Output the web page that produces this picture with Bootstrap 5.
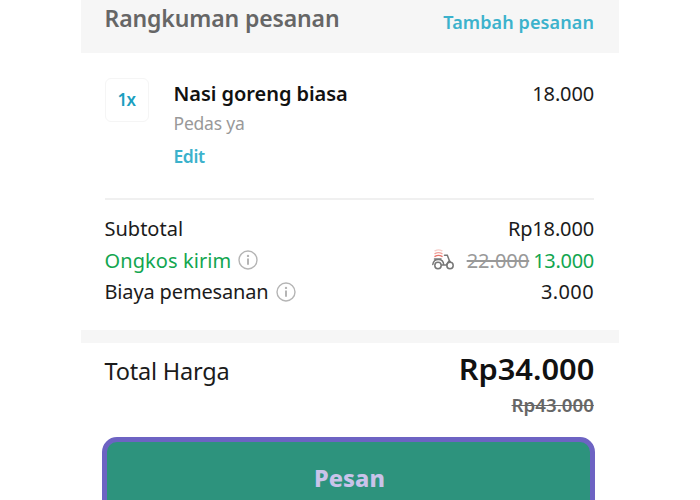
<!DOCTYPE html>
<html lang="id">
<head>
<meta charset="utf-8">
<meta name="viewport" content="width=device-width, initial-scale=1">
<title>Rangkuman pesanan</title>
<link href="https://cdn.jsdelivr.net/npm/bootstrap@5.3.0/dist/css/bootstrap.min.css" rel="stylesheet">
<style>
body{font-family:"Noto Sans","Open Sans",sans-serif;color:#1b1b1b;background:#fff;height:500px}
.sheet{width:538px;margin-left:81px;height:500px}
.inset{padding-left:23.5px;padding-right:25px}
.band-head{height:53px;background:#f6f6f6}
.heading{font-size:23px;line-height:37px;font-weight:600;color:#666;letter-spacing:-.13px}
.add-link{font-size:18px;line-height:44px;font-weight:600;color:#3cb2cc;letter-spacing:.1px}
.order{padding-top:25px;height:145px}
.qty{width:44px;height:44px;border:1.5px solid #f5f5f5;border-radius:6px;font-size:17px;font-weight:600;color:#1b9fc0;margin-right:25px;letter-spacing:-.5px}
.dish{font-size:20px;line-height:31px;font-weight:600;color:#111;letter-spacing:-.05px}
.note{font-size:17.5px;line-height:28px;color:#999;letter-spacing:-.2px}
.edit{font-size:17.5px;line-height:38px;font-weight:600;color:#3cb2cc;letter-spacing:-.4px}
.price{font-size:20px;line-height:31px;letter-spacing:-.15px}
.rule{height:2px;background:#f0f0f0}
.costs{padding-top:13px;height:130px}
.cost{height:31.5px;line-height:31.5px;font-size:20px}
.info{margin-left:7px}
.fee{color:#12a650}
.fee-label{letter-spacing:.08px}
.scooter{margin-right:13px;margin-bottom:2px}
.old{color:#999;margin-right:4px}
.tight{letter-spacing:-.15px}
.tighter{letter-spacing:-.3px}
.loose{letter-spacing:.4px}
.band{height:13px;background:#f6f6f6}
.total{height:94px}
.total-label{font-size:23.5px;line-height:56px;letter-spacing:-.2px}
.grand,.before{transform:scaleX(1.1);transform-origin:right center}
.grand{font-size:28px;line-height:52px;font-weight:600;color:#111}
.before{font-size:17px;line-height:22px;font-weight:600;color:#666}
.order-btn{width:493px;height:84px;margin-left:21px;border:5px solid #6d63c3;border-radius:15px;background:#2d937d;color:#c9c3ea;font-size:23.5px;line-height:73px;font-weight:800;align-items:flex-start}
.order-btn span{padding-left:2px}
</style>
<script src="https://cdn.jsdelivr.net/npm/bootstrap@5.3.0/dist/js/bootstrap.bundle.min.js"></script>
</head>
<body class="overflow-hidden">
<main class="sheet overflow-hidden text-nowrap">
  <header class="band-head inset d-flex justify-content-between align-items-start">
    <h1 class="heading m-0">Rangkuman pesanan</h1>
    <a class="add-link text-decoration-none" href="#">Tambah pesanan</a>
  </header>
  <section class="order inset d-flex align-items-start">
    <div class="qty d-flex align-items-center justify-content-center">1x</div>
    <div class="d-flex flex-column align-items-start flex-grow-1">
      <div class="dish">Nasi goreng biasa</div>
      <div class="note">Pedas ya</div>
      <a class="edit text-decoration-none" href="#">Edit</a>
    </div>
    <div class="price">18.000</div>
  </section>
  <div class="inset"><div class="rule"></div></div>
  <section class="costs inset">
    <div class="cost d-flex justify-content-between"><span>Subtotal</span><span class="tight">Rp18.000</span></div>
    <div class="cost d-flex justify-content-between fee">
      <div class="d-flex align-items-center"><span class="fee-label">Ongkos kirim</span>
        <svg class="info" width="20" height="20" viewBox="0 0 20 20" fill="none" stroke="#b5b5b5" stroke-width="1.4"><circle cx="10" cy="10" r="9"/><path d="M10 8.5V14.7" stroke-width="2"/><circle cx="10" cy="5.9" r="1.2" fill="#b5b5b5" stroke="none"/></svg>
      </div>
      <div class="d-flex align-items-center">
        <svg class="scooter" width="22" height="21" viewBox="0 0 22 21" fill="none" stroke-linecap="round"><g stroke-width="1.4"><path d="M3 1.8Q6.5 0 10 1.8" stroke="#f6cfcb"/><path d="M3 4.6Q6.5 2.6 10 4.6" stroke="#f1a39c"/><path d="M3 7.4Q6.5 5.4 10 7.4" stroke="#e9746b"/></g><g stroke="#777" stroke-width="1.5"><path d="M.8 15.5Q1.5 10.5 6.5 10.5Q11.5 10.5 11.7 16H14.5L17.3 11.5L15.3 6.3H12.5M2.5 10H9M17.3 11.5L18.3 13M9.8 16H15"/><circle cx="6" cy="16.5" r="3.2"/><circle cx="18" cy="16.5" r="3.2"/></g></svg>
        <s class="old">22.000</s><span class="tighter">13.000</span>
      </div>
    </div>
    <div class="cost d-flex justify-content-between">
      <div class="d-flex align-items-center"><span class="tight">Biaya pemesanan</span>
        <svg class="info" width="20" height="20" viewBox="0 0 20 20" fill="none" stroke="#b5b5b5" stroke-width="1.4"><circle cx="10" cy="10" r="9"/><path d="M10 8.5V14.7" stroke-width="2"/><circle cx="10" cy="5.9" r="1.2" fill="#b5b5b5" stroke="none"/></svg>
      </div>
      <span class="loose">3.000</span>
    </div>
  </section>
  <div class="band"></div>
  <section class="total inset d-flex justify-content-between align-items-start">
    <div class="total-label">Total Harga</div>
    <div class="d-flex flex-column align-items-end">
      <div class="grand">Rp34.000</div>
      <div class="before"><s>Rp43.000</s></div>
    </div>
  </section>
  <button type="button" class="order-btn d-flex justify-content-center p-0"><span>Pesan</span></button>
</main>
</body>
</html>
